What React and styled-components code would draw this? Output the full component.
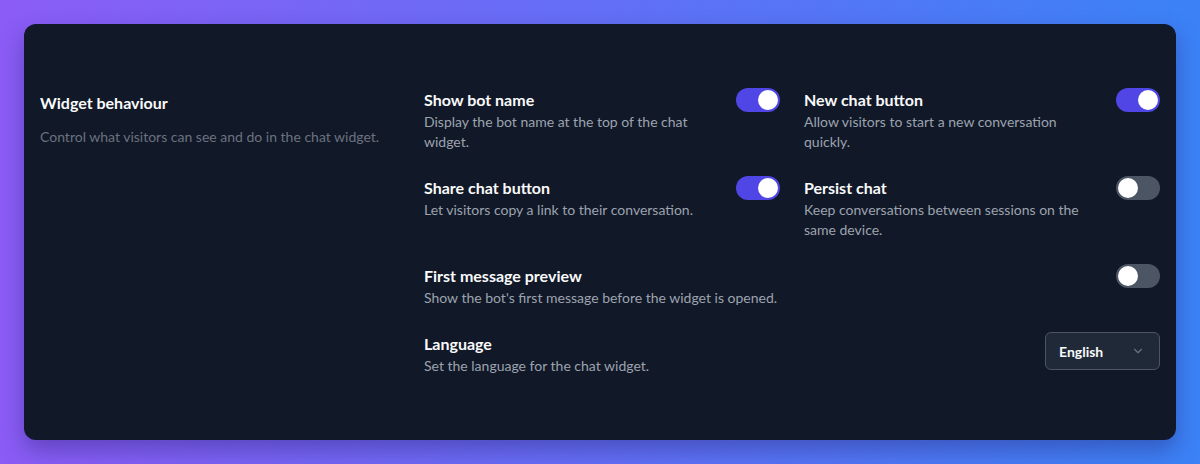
import styled, { createGlobalStyle } from "styled-components";

const GlobalStyle = createGlobalStyle`
  * { box-sizing: border-box; }
  html, body { margin: 0; padding: 0; }
  body {
    font-family: Lato, "Noto Sans", sans-serif;
    -webkit-font-smoothing: antialiased;
  }
`;

const settings = [
  { title: "Show bot name", desc: "Display the bot name at the top of the chat widget.", on: true },
  { title: "New chat button", desc: "Allow visitors to start a new conversation quickly.", on: true },
  { title: "Share chat button", desc: "Let visitors copy a link to their conversation.", on: true },
  { title: "Persist chat", desc: "Keep conversations between sessions on the same device.", on: false },
  { title: "First message preview", desc: "Show the bot's first message before the widget is opened.", on: false, wide: true },
];

function App() {
  return (
    <Page>
      <GlobalStyle />
      <Card>
        <Intro>
          <Heading>Widget behaviour</Heading>
          <IntroText>Control what visitors can see and do in the chat widget.</IntroText>
        </Intro>
        <Options>
          {settings.map((s) => (
            <Option key={s.title} $wide={s.wide}>
              <OptionText $wide={s.wide}>
                <OptionTitle>{s.title}</OptionTitle>
                <OptionDesc>{s.desc}</OptionDesc>
              </OptionText>
              <Toggle $on={s.on} role="switch" aria-checked={s.on}>
                <Knob $on={s.on} />
              </Toggle>
            </Option>
          ))}
          <Option $wide>
            <OptionText $wide>
              <OptionTitle>Language</OptionTitle>
              <OptionDesc>Set the language for the chat widget.</OptionDesc>
            </OptionText>
            <Select>
              <span>English</span>
              <svg width="14" height="14" viewBox="0 0 24 24" fill="none" stroke="#6b7280" strokeWidth="2" strokeLinecap="round" strokeLinejoin="round">
                <path d="m6 9 6 6 6-6" />
              </svg>
            </Select>
          </Option>
        </Options>
      </Card>
    </Page>
  );
}

const Page = styled.div`
  width: 1200px;
  height: 464px;
  padding: 24px;
  background: linear-gradient(90deg, #8b5cf6 0%, #3b82f6 100%);
`;

const Card = styled.div`
  height: 416px;
  background: #111827;
  border-radius: 12px;
  box-shadow: 0 10px 22px rgba(30, 20, 90, 0.35);
  padding: 64px 16px 0;
  display: grid;
  grid-template-columns: 360px 736px;
  column-gap: 24px;
  align-items: start;
`;

const Intro = styled.div`
  display: flex;
  flex-direction: column;
  padding-top: 1px;
`;

const Heading = styled.h2`
  margin: 0;
  color: #f9fafb;
  font-size: 16px;
  font-weight: 700;
  line-height: 28px;
`;

const IntroText = styled.p`
  margin: 9px 0 0;
  color: #6b7280;
  font-size: 14px;
  line-height: 22px;
`;

const Options = styled.div`
  display: grid;
  grid-template-columns: 1fr 1fr;
  gap: 24px;
`;

const Option = styled.div`
  grid-column: ${(p) => (p.$wide ? "1 / -1" : "auto")};
  display: flex;
  justify-content: space-between;
  align-items: flex-start;
  gap: 16px;
`;

const OptionText = styled.div`
  max-width: ${(p) => (p.$wide ? "none" : "296px")};
`;

const OptionTitle = styled.div`
  color: #f9fafb;
  font-size: 16px;
  font-weight: 700;
  line-height: 24px;
`;

const OptionDesc = styled.div`
  color: #9ca3af;
  font-size: 14px;
  line-height: 20px;
`;

const Toggle = styled.div`
  flex: none;
  width: 44px;
  height: 24px;
  border-radius: 12px;
  padding: 2px;
  background: ${(p) => (p.$on ? "#4f46e5" : "#4b5563")};
  display: flex;
  justify-content: ${(p) => (p.$on ? "flex-end" : "flex-start")};
`;

const Knob = styled.div`
  width: 20px;
  height: 20px;
  border-radius: 50%;
  background: #ffffff;
`;

const Select = styled.div`
  flex: none;
  width: 115px;
  height: 38px;
  border: 1px solid #4b5563;
  border-radius: 6px;
  background: #1f2937;
  display: flex;
  align-items: center;
  justify-content: space-between;
  padding: 0 14px 0 13px;
  color: #f9fafb;
  font-size: 14px;
  font-weight: 700;
`;

export default App;
